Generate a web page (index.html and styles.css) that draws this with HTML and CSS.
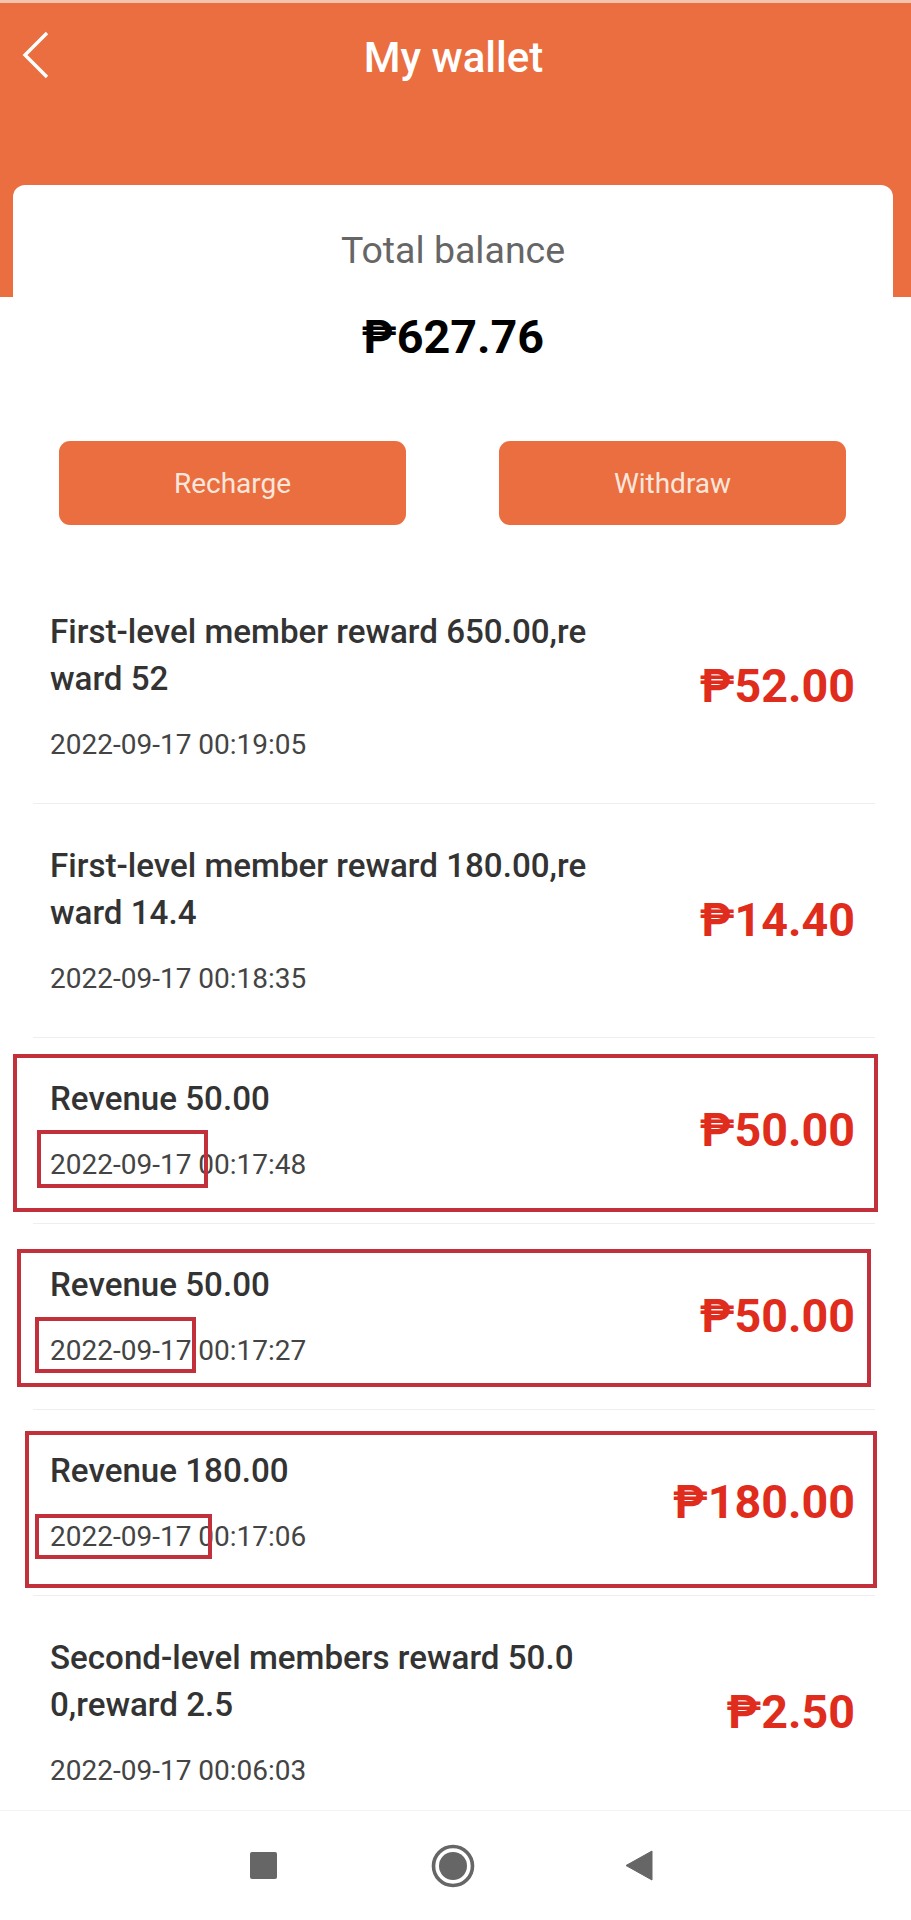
FILE: index.html
```html
<!DOCTYPE html>
<html lang="en">
<head>
<meta charset="utf-8">
<title>My wallet</title>
<link rel="stylesheet" href="styles.css">
</head>
<body>
<div class="page">
  <header class="hero">
    <svg class="back" width="28" height="48" viewBox="0 0 28 48"><path d="M25 2 L3 24 L25 46" fill="none" stroke="#fff" stroke-width="3.4"/></svg>
    <h1 class="title">My wallet</h1>
  </header>
  <section class="card">
    <div class="label">Total balance</div>
    <div class="balance">₱627.76</div>
    <div class="actions">
      <div class="btn">Recharge</div>
      <div class="btn">Withdraw</div>
    </div>
  </section>
  <main class="list">
    <div class="row row-tall">
      <div class="info">
        <div class="name">First-level member reward 650.00,re<br>ward 52</div>
        <div class="date">2022-09-17 00:19:05</div>
      </div>
      <div class="amt">₱52.00</div>
    </div>
    <div class="row row-tall">
      <div class="info">
        <div class="name">First-level member reward 180.00,re<br>ward 14.4</div>
        <div class="date">2022-09-17 00:18:35</div>
      </div>
      <div class="amt">₱14.40</div>
    </div>
    <div class="row">
      <div class="info">
        <div class="name">Revenue 50.00</div>
        <div class="date">2022-09-17 00:17:48</div>
      </div>
      <div class="amt">₱50.00</div>
    </div>
    <div class="row">
      <div class="info">
        <div class="name">Revenue 50.00</div>
        <div class="date">2022-09-17 00:17:27</div>
      </div>
      <div class="amt">₱50.00</div>
    </div>
    <div class="row">
      <div class="info">
        <div class="name">Revenue 180.00</div>
        <div class="date">2022-09-17 00:17:06</div>
      </div>
      <div class="amt">₱180.00</div>
    </div>
    <div class="row row-tall row-last">
      <div class="info">
        <div class="name">Second-level members reward 50.0<br>0,reward 2.5</div>
        <div class="date">2022-09-17 00:06:03</div>
      </div>
      <div class="amt">₱2.50</div>
    </div>
  </main>
  <nav class="navbar">
    <svg width="27" height="27" viewBox="0 0 27 27"><rect width="27" height="27" rx="2" fill="#666"/></svg>
    <svg width="44" height="44" viewBox="0 0 44 44"><circle cx="22" cy="22" r="19.5" fill="none" stroke="#666" stroke-width="3.6"/><circle cx="22" cy="22" r="14" fill="#666"/></svg>
    <svg class="nav-back" width="28" height="31" viewBox="0 0 28 31"><path d="M27 1 V30 L1 15.5 Z" fill="#666" stroke="#666" stroke-linejoin="round"/></svg>
  </nav>
  <div class="mark m1"></div>
  <div class="mark m2"></div>
  <div class="mark m3"></div>
  <div class="mark m4"></div>
  <div class="mark m5"></div>
  <div class="mark m6"></div>
</div>
</body>
</html>
```
FILE: styles.css
```css
* { box-sizing: border-box; }
html, body { margin: 0; padding: 0; background: #fff; }
.page {
  position: relative;
  width: 911px;
  height: 1920px;
  overflow: hidden;
  font-family: Roboto, "Liberation Sans", sans-serif;
  background: #fff;
}
.hero {
  height: 297px;
  background: #ea6e3f;
  border-top: 3px solid #f3c4b0;
  display: flex;
  justify-content: center;
  align-items: flex-start;
  position: relative;
}
.back { position: absolute; left: 22px; top: 28px; }
.title {
  margin: 31px 4px 0 0;
  font-size: 42px;
  line-height: 47px;
  font-weight: 500;
  color: #fff;
}
.card {
  width: 880px;
  margin: -112px 0 0 13px;
  position: relative;
  background: #fff;
  border-radius: 12px 12px 0 0;
  padding-top: 43px;
  display: flex;
  flex-direction: column;
  align-items: center;
}
.label {
  font-size: 37.5px;
  line-height: 44px;
  color: #666;
}
.balance {
  margin-top: 38px;
  font-size: 46.7px;
  line-height: 54px;
  font-weight: 700;
  color: #000;
}
.actions {
  align-self: stretch;
  margin-top: 77px;
  padding: 0 46px;
  display: flex;
  justify-content: space-between;
}
.btn {
  width: 347px;
  height: 84px;
  background: #ea6e3f;
  border-radius: 11px;
  color: #fbe6dc;
  font-size: 28px;
  display: flex;
  align-items: center;
  justify-content: center;
}
.btn:last-child { margin-right: 1px; }
.list {
  margin: 45px 36px 0 33px;
}
.row {
  display: flex;
  justify-content: space-between;
  align-items: center;
  height: 186px;
  padding: 0 20px 2px 17px;
  border-bottom: 1px solid #eee;
}
.row-tall { height: 234px; }
.row-last { border-bottom: 0; }
.name {
  font-size: 33.15px;
  line-height: 47px;
  font-weight: 500;
  color: #333;
}
.date {
  margin-top: 24px;
  font-size: 28px;
  line-height: 38px;
  color: #444;
}
.amt {
  font-size: 46.6px;
  font-weight: 700;
  color: #df2c1c;
}
.navbar {
  position: absolute;
  left: 0;
  right: 0;
  bottom: 0;
  height: 110px;
  padding-right: 9px;
  background: #fff;
  border-top: 1px solid #f3f3f3;
  display: flex;
  align-items: center;
  justify-content: center;
  gap: 154px;
}
.nav-back { margin-left: -4px; }
.mark {
  position: absolute;
  border: 4px solid #c2303c;
}
.m1 { left: 13px; top: 1054px; width: 865px; height: 158px; }
.m2 { left: 37px; top: 1130px; width: 171px; height: 58px; }
.m3 { left: 17px; top: 1249px; width: 854px; height: 138px; }
.m4 { left: 35px; top: 1317px; width: 161px; height: 56px; }
.m5 { left: 25px; top: 1431px; width: 852px; height: 157px; }
.m6 { left: 35px; top: 1514px; width: 177px; height: 45px; }
```
